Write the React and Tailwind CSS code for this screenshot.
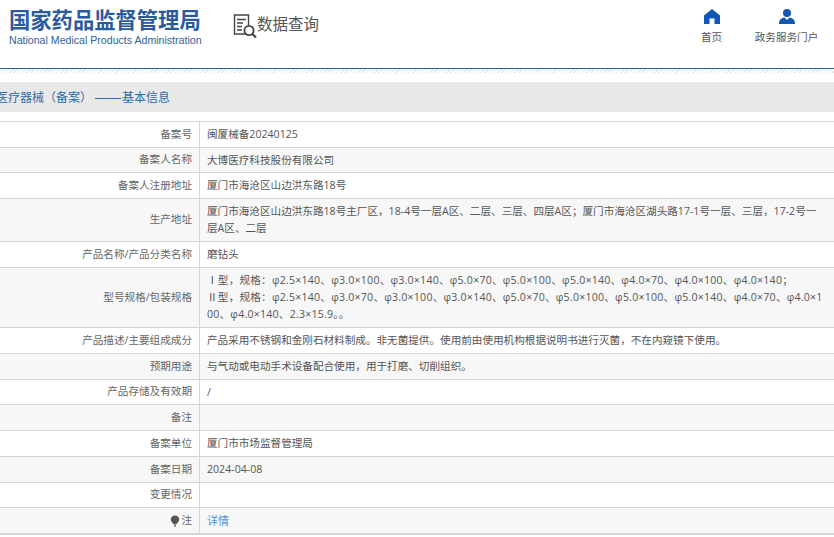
const rows = [
  { label: "备案号", value: "闽厦械备20240125", h: "h-[26px]" },
  { label: "备案人名称", value: "大博医疗科技股份有限公司", h: "h-[25px]", alt: true },
  { label: "备案人注册地址", value: "厦门市海沧区山边洪东路18号", h: "h-[26px]" },
  {
    label: "生产地址",
    value: ["厦门市海沧区山边洪东路18号主厂区，18-4号一层A区、二层、三层、四层A区；厦门市海沧区湖头路17-1号一层、三层，17-2号一", "层A区、二层"],
    h: "h-[43px]",
    alt: true,
  },
  { label: "产品名称/产品分类名称", value: "磨钻头", h: "h-[26px]" },
  {
    label: "型号规格/包装规格",
    value: [
      "Ⅰ型，规格：φ2.5×140、φ3.0×100、φ3.0×140、φ5.0×70、φ5.0×100、φ5.0×140、φ4.0×70、φ4.0×100、φ4.0×140；",
      "Ⅱ型，规格：φ2.5×140、φ3.0×70、φ3.0×100、φ3.0×140、φ5.0×70、φ5.0×100、φ5.0×100、φ5.0×140、φ4.0×70、φ4.0×1",
      "00、φ4.0×140、2.3×15.9。。",
    ],
    h: "h-[60px]",
    alt: true,
    spec: true,
  },
  { label: "产品描述/主要组成成分", value: "产品采用不锈钢和金刚石材料制成。非无菌提供。使用前由使用机构根据说明书进行灭菌，不在内窥镜下使用。", h: "h-[26px]" },
  { label: "预期用途", value: "与气动或电动手术设备配合使用，用于打磨、切削组织。", h: "h-[26px]", alt: true },
  { label: "产品存储及有效期", value: "/", h: "h-[25px]" },
  { label: "备注", value: "", h: "h-[26px]", alt: true },
  { label: "备案单位", value: "厦门市市场监督管理局", h: "h-[26px]" },
  { label: "备案日期", value: "2024-04-08", h: "h-[26px]", alt: true },
  { label: "变更情况", value: "", h: "h-[25px]" },
];

const Row = ({ row }) => {
  const lines = Array.isArray(row.value) ? row.value : [row.value];
  return (
    <div className={`flex border-b border-[#d6d6d6] ${row.h} ${row.alt ? "bg-[#f7f7f7]" : "bg-white"}`}>
      <div className="w-[199px] shrink-0 flex items-center justify-end pr-[7px] text-[#666]">{row.label}</div>
      <div className={`flex-1 border-l border-[#d6d6d6] pl-[7px] flex flex-col justify-center leading-[17px] whitespace-nowrap overflow-hidden ${row.spec ? "tracking-[0.22px]" : ""}`}>
        {lines.map((line, i) => (
          <div key={i}>{line}</div>
        ))}
      </div>
    </div>
  );
};

export default function App() {
  return (
    <div className="w-[834px] h-[537px] overflow-hidden bg-white text-[10.6px] text-[#555] font-['Open_Sans','Noto_Sans_CJK_SC',sans-serif]">
      {/* Header */}
      <div className="h-[68px] flex">
        <div className="w-[233px] pl-[9px] pt-[6px]">
          <div className="text-[21.3px] leading-[26px] font-bold text-[#2a5b9e] whitespace-nowrap font-['Noto_Sans_CJK_SC',sans-serif]">国家药品监督管理局</div>
          <div className="text-[10.6px] leading-[14px] mt-[1px] text-[#2f6296] whitespace-nowrap font-['Liberation_Sans',sans-serif]">
            National Medical Products Administration
          </div>
        </div>
        <div className="flex items-start pt-[14px]">
          <svg width="24" height="25" viewBox="0 0 24 25" fill="none" stroke="#444" strokeWidth="1.4">
            <path d="M14 20H1.5V1H15.5V11" />
            <path d="M4 5.5H13M4 9H10M4 12.5H9M4 16H9" />
            <circle cx="16" cy="16.5" r="4.6" strokeWidth="1.8" />
            <path d="M19.5 20L23 23.5" strokeWidth="2.2" />
          </svg>
          <span className="text-[15.5px] leading-[21px] text-[#555] whitespace-nowrap">数据查询</span>
        </div>
        <div className="ml-auto flex pr-[16px] pt-[9px] text-[#555]">
          <div className="w-[21px] flex flex-col items-center">
            <svg width="16" height="15" viewBox="0 0 16 15" fill="#1257b5">
              <path d="M8 0L16 6.5V15H10.5V9.5H5.5V15H0V6.5Z" />
            </svg>
            <span className="mt-[5px] leading-[16px] whitespace-nowrap">首页</span>
          </div>
          <div className="ml-[33px] w-[63px] flex flex-col items-center">
            <svg width="16" height="15" viewBox="0 0 16 15" fill="#1257b5">
              <circle cx="8" cy="4" r="4" />
              <path d="M0 15C0 11 2 9 5.5 8.5L8 11L10.5 8.5C14 9 16 11 16 15Z" />
            </svg>
            <span className="mt-[5px] leading-[16px] whitespace-nowrap">政务服务门户</span>
          </div>
        </div>
      </div>
      <div className="h-[1px] bg-[#2a6496]" />
      <div className="h-[4px] bg-[repeating-linear-gradient(135deg,#e4e8ec_0px,#e4e8ec_1px,#ffffff_1px,#ffffff_3px)]" />

      {/* Title bar */}
      <div className="mt-[9px] h-[30px] pt-[2px] bg-[#e8e8e8] flex items-center text-[12px] text-[#2a6da8] whitespace-nowrap">
        <span className="-ml-[4px] font-['Noto_Sans_CJK_SC',sans-serif]">
          医疗器械（备案）
          <span className="ml-[3px] mr-[1px] text-[13px] font-['Liberation_Sans',sans-serif]">——</span>
          基本信息
        </span>
      </div>

      {/* Table */}
      <div className="mt-[9px] border-t border-[#d6d6d6]">
        {rows.map((row) => (
          <Row key={row.label} row={row} />
        ))}
        <div className="flex h-[27px] bg-[#f7f7f7] border-b-2 border-[#d6d6d6]">
          <div className="w-[199px] shrink-0 flex items-center justify-end pr-[7px] text-[#666]">
            <svg width="10" height="12" viewBox="0 0 10 12" fill="#555">
              <path d="M5 0.5C7.6 0.5 9.2 2.4 9.2 4.6C9.2 6.8 7 8.2 6 9.5H4C3 8.2 0.8 6.8 0.8 4.6C0.8 2.4 2.4 0.5 5 0.5Z" />
              <path d="M4 10.2H6V11.5H4Z" />
            </svg>
            <span className="ml-[1px]">注</span>
          </div>
          <div className="flex-1 border-l border-[#d6d6d6] pl-[7px] pt-[2px] flex items-center text-[11px] text-[#4a90d9]">详情</div>
        </div>
      </div>
    </div>
  );
}
